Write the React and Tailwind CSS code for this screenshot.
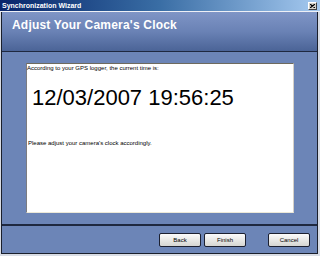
export default function App() {
  return (
    <div
      className="w-[320px] h-[256px] bg-[#d8dce4] flex flex-col overflow-hidden"
      style={{ fontFamily: '"Liberation Sans", Arial, sans-serif' }}
    >
      {/* Title bar */}
      <div className="h-[11px] shrink-0 flex items-center justify-between bg-gradient-to-r from-[#0a246a] via-[#3a6ea5] to-[#a6caf0] pl-[2px] pr-[3px]">
        <span className="text-[7px] font-bold text-white leading-none">
          Synchronization Wizard
        </span>
        <div className="w-[9px] h-[8px] bg-[#d4d0c8] border border-t-white border-l-white border-r-[#404040] border-b-[#404040] flex items-center justify-center">
          <svg width="5" height="4" viewBox="0 0 5 4">
            <path d="M0 0L5 4M5 0L0 4" stroke="#000" strokeWidth="1.2" />
          </svg>
        </div>
      </div>
      <div className="h-px shrink-0 bg-[#eef0f6]" />

      {/* Window frame */}
      <div className="flex-1 flex flex-col ml-px mr-[2px] mb-[2px] border-l border-r border-b border-[#1a1f2c] bg-[#6c85b7]">
        {/* Header */}
        <div className="h-[39px] shrink-0 bg-gradient-to-b from-[#7f95c6] via-[#6a82b5] to-[#4b6497] pl-[10px] pt-[6px]">
          <h1 className="text-[12px] font-bold text-white leading-[14px] tracking-[0.2px]">
            Adjust Your Camera's Clock
          </h1>
        </div>
        <div className="h-px shrink-0 bg-[#1f2940]" />

        {/* Body */}
        <div className="flex-1 flex flex-col">
          <div className="pt-[11px] pl-[24px] pr-[23px]">
            <div className="h-[150px] bg-white border-t border-l border-t-[#6e6a5e] border-l-[#7c7c80] border-r border-b border-r-[#d4d0c8] border-b-[#ece9d8] flex flex-col">
              <p className="text-[6px] leading-[7px] text-black pt-px">
                According to your GPS logger, the current time is:
              </p>
              <p className="text-[22px] leading-none text-black pl-[5px] mt-[15px]">
                12/03/2007 19:56:25
              </p>
              <p className="text-[6px] leading-[7px] text-black pl-px mt-[31px]">
                Please adjust your camera's clock accordingly.
              </p>
            </div>
          </div>

          <div className="mt-[11px] h-[2px] bg-[#1f2940]" />

          {/* Buttons */}
          <div className="flex items-start pt-[7px] pl-[157px]">
            <button className="w-[42px] h-[14px] rounded-[2px] border border-[#1c2030] bg-gradient-to-b from-[#fbfbfb] to-[#d6d6d2] text-[6px] text-black leading-none">
              Back
            </button>
            <button className="ml-[3px] w-[42px] h-[14px] rounded-[2px] border border-[#1c2030] bg-gradient-to-b from-[#fbfbfb] to-[#d6d6d2] text-[6px] text-black leading-none">
              Finish
            </button>
            <button className="ml-[22px] w-[42px] h-[14px] rounded-[2px] border border-[#1c2030] bg-gradient-to-b from-[#fbfbfb] to-[#d6d6d2] text-[6px] text-black leading-none">
              Cancel
            </button>
          </div>
        </div>
      </div>
    </div>
  );
}
